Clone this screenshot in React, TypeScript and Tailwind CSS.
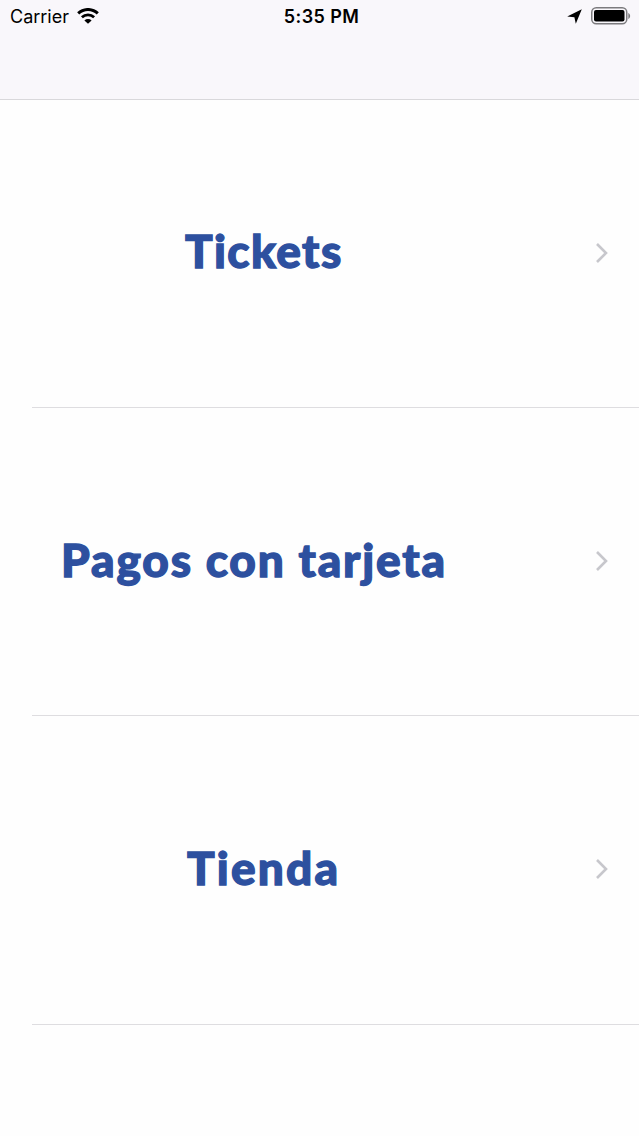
const sections = [
	{ title: "Tickets", className: "pb-1 pl-[185px] tracking-[1.4px]" },
	{ title: "Pagos con tarjeta", className: "pb-0.5 pl-[61px] tracking-[1.85px]" },
	{ title: "Tienda", className: "pb-0.5 pl-[187px] tracking-[2.2px]" },
];

function WifiIcon() {
	return (
		<svg width="22" height="16" viewBox="0 0 22 16" fill="none">
			<path d="M1.2 5.4a14.2 14.2 0 0 1 19.6 0" stroke="#000" strokeWidth="3" />
			<path d="M4.9 9.2a9 9 0 0 1 12.2 0" stroke="#000" strokeWidth="2.8" />
			<path d="M11 15.8 7.4 12.5a5.3 5.3 0 0 1 7.2 0Z" fill="#000" />
		</svg>
	);
}

function LocationIcon() {
	return (
		<svg width="15" height="15" viewBox="0 0 15 15">
			<path d="M14.8.2 8.8 14.8 7.4 8.3.2 7.6Z" fill="#000" />
		</svg>
	);
}

function BatteryIcon() {
	return (
		<svg width="40" height="18" viewBox="0 0 40 18" fill="none">
			<rect x=".75" y=".75" width="35" height="16" rx="4.5" stroke="#7c7b7e" strokeWidth="1.5" />
			<rect x="3" y="3" width="30.5" height="11.5" rx="2" fill="#000" />
			<path d="M37.3 6v6c2.4-.8 2.4-5.2 0-6Z" fill="#7c7b7e" />
		</svg>
	);
}

function ChevronIcon() {
	return (
		<svg width="14" height="22" viewBox="0 0 14 22" fill="none">
			<path d="m2 2 9 9-9 9" stroke="#c7c7cc" strokeWidth="2.6" />
		</svg>
	);
}

function StatusBar() {
	return (
		<div className="grid h-8 grid-cols-3 items-center text-lg leading-none text-black">
			<div className="flex items-center gap-2 pl-[10px]">
				<span className="pt-0.5">Carrier</span>
				<WifiIcon />
			</div>
			<span className="pt-0.5 pl-1 text-center font-semibold tracking-[0.4px]">5:35 PM</span>
			<div className="flex items-center justify-end gap-[9px] pr-[8px]">
				<LocationIcon />
				<BatteryIcon />
			</div>
		</div>
	);
}

export default function App() {
	return (
		<div className="h-[1136px] w-[639px] overflow-hidden bg-[#fefefe] font-['Inter',sans-serif]">
			<header className="h-[100px] border-b border-[#d9d8db] bg-[#f9f7fb]">
				<StatusBar />
			</header>
			<ul>
				{sections.map(({ title, className }) => (
					<li key={title} className="flex h-[308.2px] flex-col">
						<a href="#" className="flex flex-1 items-center justify-between pr-[30px] pb-[2px]">
							<span
								className={`font-['Lato',sans-serif] text-[46px] leading-none font-black whitespace-nowrap text-[#2d509f] [-webkit-text-stroke:1.3px_#2d509f] ${className}`}
							>
								{title}
							</span>
							<ChevronIcon />
						</a>
						<div className="ml-8 h-px bg-[#dedde0]" />
					</li>
				))}
			</ul>
		</div>
	);
}
